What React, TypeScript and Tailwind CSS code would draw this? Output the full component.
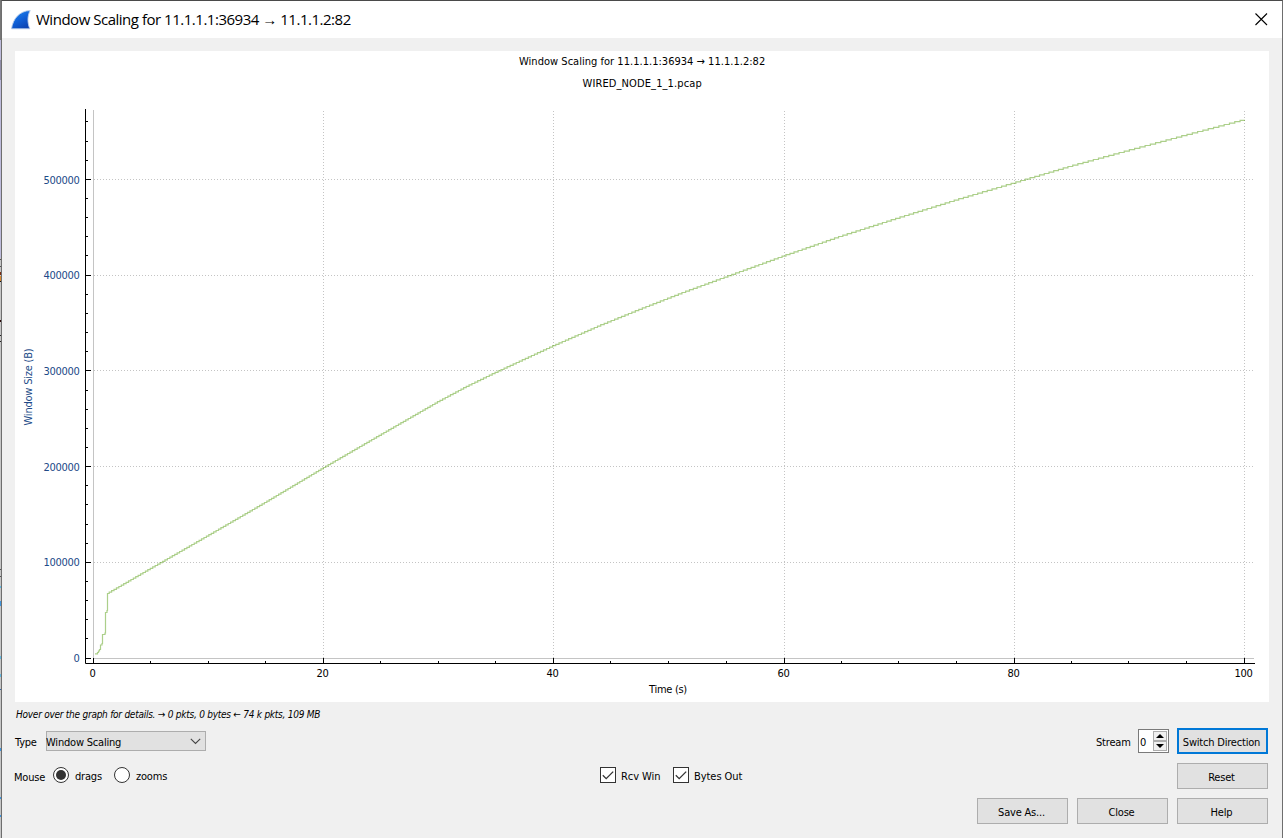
import type { ReactNode } from "react";

const BASE_X = 93.5;
const BASE_Y = 658.1;

const SAMPLES: [number, number][] = [
  [108, 593.5], [148, 570.3], [162, 562.3], [208.5, 535.6], [265.5, 502.6], [323.5, 468.1],
  [380.5, 435.1], [438.5, 401.8], [467, 386.6], [496.5, 372.3], [553.5, 346], [600, 325.7], [640, 309.5],
  [684, 292.4], [729, 276], [784.5, 255.9], [840, 236.7], [900, 217.6], [960, 199], [1014.5, 183],
  [1072, 166], [1129, 150.5], [1187, 135], [1245, 119.7],
];

const STEP = 1.4;

function buildCurve(): string {
  let d = "M95 653.8H97.5V652.5H98.5V651H99.5V649.5H100.5V645H102V643.5H102.5V634.5H105V633H105.5V612.5H107V610.5H107.5V593.5H109";
  let level = 593.5;
  for (let i = 1; i < SAMPLES.length; i++) {
    const [x0, y0] = SAMPLES[i - 1];
    const [x1, y1] = SAMPLES[i];
    while (level - STEP / 2 >= y1) {
      const x = x0 + ((y0 - (level - STEP / 2)) / (y0 - y1)) * (x1 - x0);
      level -= STEP;
      d += `H${x.toFixed(2)}V${level.toFixed(2)}`;
    }
  }
  return d + "H1245";
}

const CURVE = buildCurve();
const X_MAJOR = [0, 1, 2, 3, 4, 5].map((i) => Math.floor(BASE_X + i * 230.2) + 0.5);
const X_MINOR = Array.from({ length: 21 }, (_, i) => i)
  .filter((i) => i % 4 !== 0)
  .map((i) => Math.floor(93 + i * 57.55) + 0.5);
const Y_MAJOR = [0, 1, 2, 3, 4, 5].map((i) => Math.floor(BASE_Y - i * 95.75) + 0.5);
const Y_MINOR = Array.from({ length: 29 }, (_, i) => i)
  .filter((i) => i % 5 !== 0)
  .map((i) => Math.floor(BASE_Y - i * 19.15) + 0.5);
const X_TEXT_WIDTH = [6, 12, 12, 12, 12, 18];
const Y_TEXT_BASELINE = [662, 566, 471, 375, 279, 184];

function Chart() {
  return (
    <svg
      width="1254"
      height="651"
      viewBox="15 51 1254 651"
      className="block bg-white font-['DejaVu_Sans_Condensed','DejaVu_Sans',sans-serif] text-[11px]"
    >
      <g fill="#000" textAnchor="middle">
        <text x="642" y="65" textLength="246">Window Scaling for 11.1.1.1:36934 → 11.1.1.2:82</text>
        <text x="642" y="87" textLength="119">WIRED_NODE_1_1.pcap</text>
        <text x="668" y="693" textLength="38">Time (s)</text>
        {X_MAJOR.map((x, i) => (
          <text key={i} x={x - 1} y="677" textLength={X_TEXT_WIDTH[i]}>{i * 20}</text>
        ))}
      </g>
      <g fill="#204a87" textAnchor="end">
        {Y_TEXT_BASELINE.map((y, i) => (
          <text key={i} x="79.5" y={y} textLength={i === 0 ? 6 : 36}>{i * 100000}</text>
        ))}
        <text transform="translate(32 387) rotate(-90)" textAnchor="middle" textLength="77">Window Size (B)</text>
      </g>
      <g stroke="#c4c4c4" strokeDasharray="1 2">
        {X_MAJOR.slice(1).map((x) => <path key={x} d={`M${x} 111V658`} />)}
        {Y_MAJOR.slice(1).map((y) => <path key={y} d={`M94 ${y}H1254`} />)}
      </g>
      <path d="M93.5 110V658M93 658.5H1254" stroke="#c4c4c4" fill="none" />
      <path d={CURVE} stroke="#4e9a06" strokeOpacity="0.47" strokeWidth="1.2" fill="none" />
      <g stroke="#000" fill="none">
        <path d="M85.5 109V663.5H1255" />
        {X_MAJOR.map((x) => <path key={x} d={`M${x} 658V663`} />)}
        {X_MINOR.map((x) => <path key={x} d={`M${x} 661V663`} />)}
        {Y_MAJOR.map((y) => <path key={y} d={`M86 ${y}H91`} />)}
        {Y_MINOR.map((y) => <path key={y} d={`M86 ${y}H88`} />)}
      </g>
    </svg>
  );
}

function Button({ children, primary }: { children: ReactNode; primary?: boolean }) {
  return (
    <button
      className={
        "flex h-[26px] w-[91px] shrink-0 items-center justify-center bg-[#e1e1e1] pt-[3px] pr-[2px] whitespace-nowrap " +
        (primary ? "border-2 border-[#0078d7]" : "border border-[#adadad]")
      }
    >
      {children}
    </button>
  );
}

function Radio({ checked }: { checked?: boolean }) {
  return (
    <svg width="16" height="16" viewBox="0 0 16 16" className="shrink-0">
      <circle cx="8" cy="8" r="7.5" fill="#fff" stroke="#333" />
      {checked && <circle cx="8" cy="8" r="5" fill="#333" />}
    </svg>
  );
}

function Check() {
  return (
    <svg width="16" height="16" viewBox="0 0 16 16" className="shrink-0">
      <rect x="0.5" y="0.5" width="15" height="15" fill="#fff" stroke="#333" />
      <path d="M2.8 8.2L6.2 11.6L13.2 4.6" fill="none" stroke="#333" strokeWidth="1.3" />
    </svg>
  );
}

function EdgeStrip() {
  return (
    <svg width="1" height="838" className="shrink-0" shapeRendering="crispEdges">
      <rect width="1" height="838" fill="#c6c6c6" />
      <rect width="1" height="40" fill="#777" />
      <rect y="40" width="1" height="20" fill="#bdbbdb" />
      <rect y="60" width="1" height="20" fill="#8f8da8" />
      <rect y="80" width="1" height="178" fill="#bdbbdb" />
      <rect y="259" width="1" height="1" fill="#555" />
      <rect y="266" width="1" height="1" fill="#555" />
      <rect y="272" width="1" height="3" fill="#7a2b10" />
      <rect y="276" width="1" height="5" fill="#d98a32" />
      <rect y="281" width="1" height="1" fill="#111" />
      <rect y="320" width="1" height="2" fill="#2b0808" />
      <rect y="335" width="1" height="1" fill="#222" />
      <rect y="341" width="1" height="1" fill="#222" />
      <rect y="569" width="1" height="1" fill="#555" />
      <rect y="576" width="1" height="1" fill="#555" />
      <rect y="586" width="1" height="2" fill="#63b8e0" />
      <rect y="601" width="1" height="5" fill="#3f95dd" />
      <rect y="656" width="1" height="3" fill="#63b8e0" />
      <rect y="674" width="1" height="3" fill="#63b8e0" />
      <rect y="689" width="1" height="1" fill="#3465a4" />
      <rect y="748" width="1" height="3" fill="#3f95dd" />
      <rect y="797" width="1" height="2" fill="#3f95dd" />
      <rect y="815" width="1" height="2" fill="#3f95dd" />
    </svg>
  );
}

export default function App() {
  return (
    <div className="flex h-[838px] w-[1283px] overflow-hidden bg-[#f0f0f0] font-['DejaVu_Sans_Condensed','DejaVu_Sans',sans-serif] text-[11px] leading-[14px] tracking-[-0.2px] text-black">
      <EdgeStrip />
      <div className="flex w-[1282px] flex-col border-t border-r border-l border-t-[#4a4a4a] border-r-[#6e6e6e] border-l-[#6e6e6e]">
        <header className="flex h-[37px] shrink-0 items-center bg-white pl-[9px]">
          <svg width="20" height="20" viewBox="0 0 20 20" className="shrink-0">
            <defs>
              <linearGradient id="fin" x1="0.2" y1="0" x2="0.8" y2="1">
                <stop offset="0" stopColor="#1f86ee" />
                <stop offset="0.5" stopColor="#0f5fd6" />
                <stop offset="1" stopColor="#0a3fae" />
              </linearGradient>
            </defs>
            <path d="M0.5 18.8C2 9 8 1 19.2 0.5C16.2 6 16.4 13 18.8 18.8Z" fill="url(#fin)" stroke="#b9cdea" strokeWidth="0.9" />
          </svg>
          <h1 className="-mt-px ml-[5px] pb-px font-['Open_Sans','Noto_Sans',sans-serif] text-[15px] leading-5 tracking-[-0.48px] whitespace-nowrap">
            Window Scaling for 11.1.1.1:36934 → 11.1.1.2:82
          </h1>
          <svg width="13" height="13" viewBox="0 0 13 13" className="mr-[14px] ml-auto">
            <path d="M0.5 0.5L12 12M12 0.5L0.5 12" stroke="#000" strokeWidth="1.1" />
          </svg>
        </header>
        <main className="flex flex-col px-[13px] pt-[13px]">
          <Chart />
          <p className="mt-[6px] h-[14px] pl-px text-[10px] tracking-[-0.25px] whitespace-nowrap italic">
            Hover over the graph for details. → 0 pkts, 0 bytes ← 74 k pkts, 109 MB
          </p>
          <div className="mt-[6px] flex h-[26px] w-[1253px] items-center">
            <span className="w-[31px] pt-[3px]">Type</span>
            <div className="flex h-5 w-[160px] items-center justify-between border border-[#adadad] bg-[#e1e1e1] pr-1">
              <span className="-ml-px pt-[3px]">Window Scaling</span>
              <svg width="11" height="7" viewBox="0 0 11 7">
                <path d="M0.8 0.8L5.5 5.5L10.2 0.8" fill="none" stroke="#444" strokeWidth="1.1" />
              </svg>
            </div>
            <span className="ml-auto w-[42px] pt-[3px]">Stream</span>
            <div className="mr-2 flex h-6 w-[31px] border border-[#7a7a7a] bg-white p-px">
              <span className="w-[13px] pt-[5px]">0</span>
              <div className="flex w-[14px] flex-col">
                <div className="flex h-[10px] items-center justify-center border border-[#adadad] bg-[#f0f0f0]">
                  <svg width="8" height="4" viewBox="0 0 8 4"><path d="M0 4L4 0L8 4Z" /></svg>
                </div>
                <div className="flex h-[10px] items-center justify-center border border-[#adadad] bg-[#f0f0f0]">
                  <svg width="8" height="4" viewBox="0 0 8 4"><path d="M0 0L4 4L8 0Z" /></svg>
                </div>
              </div>
            </div>
            <Button primary>Switch Direction</Button>
          </div>
          <div className="mt-[9px] flex h-[26px] w-[1253px] items-center">
            <span className="-ml-px w-[39px] pt-[3px]">Mouse</span>
            <div className="flex h-[26px] items-center pb-[2px]">
              <Radio checked />
              <span className="ml-[6px] w-[39px] pt-[3px]">drags</span>
              <Radio />
              <span className="ml-[6px] pt-[3px]">zooms</span>
            </div>
            <div className="ml-auto flex h-[26px] w-[577px] items-center pb-[2px]">
              <Check />
              <span className="ml-[5px] w-[52px] pt-[3px] tracking-[-0.05px]">Rcv Win</span>
              <Check />
              <span className="ml-[5px] pt-[3px] tracking-[-0.05px]">Bytes Out</span>
            </div>
            <Button>Reset</Button>
          </div>
          <div className="mt-[9px] flex w-[1253px] justify-end gap-[9px]">
            <Button>Save As...</Button>
            <Button>Close</Button>
            <Button>Help</Button>
          </div>
        </main>
      </div>
    </div>
  );
}
